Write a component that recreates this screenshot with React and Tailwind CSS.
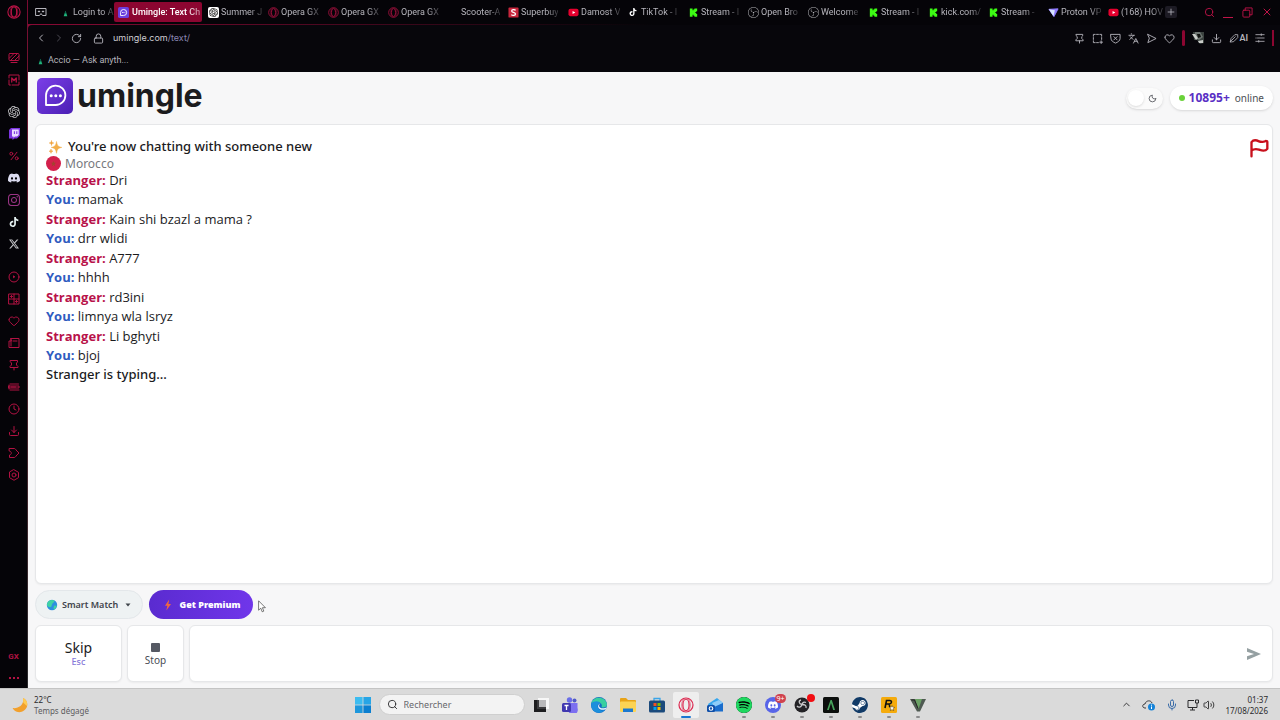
import React from "react";
import {
  SiOpenai, SiDiscord, SiInstagram, SiTiktok, SiX, SiObsstudio, SiSpotify, SiSteam,
} from "react-icons/si";
import {
  ChevronLeft, ChevronRight, RotateCw, Lock, Heart, Download, Search, X, Plus, Languages,
  Clock, ChevronUp, Mic, Volume2, Moon,
} from "lucide-react";

/* ---------- brand and emoji drawings ---------- */

const Opera = ({ className }) => (
  <svg viewBox="0 0 24 24" fill="none" stroke="currentColor" strokeWidth="1.8" className={className} aria-hidden="true">
    <circle cx="12" cy="12" r="10.5" />
    <ellipse cx="12" cy="12" rx="4.6" ry="8.6" />
    <path d="M9 3.2C4.6 6 4.6 18 9 20.8M15 3.2c4.400 2.800 4.400 14.800 0 17.600" strokeWidth="1" />
  </svg>
);

const Bubble = ({ className }) => (
  <svg viewBox="0 0 36 36" className={className} aria-hidden="true">
    <defs>
      <linearGradient id="bubbleFill" x1="0" y1="0" x2="1" y2="1">
        <stop offset="0" stopColor="#7c3fe8" />
        <stop offset="1" stopColor="#4a1fb4" />
      </linearGradient>
    </defs>
    <rect width="36" height="36" rx="5" fill="url(#bubbleFill)" />
    <path d="M9 27V17.500A9.700 9.700 0 1 1 18.700 27z" fill="none" stroke="#fff" strokeWidth="1.800" strokeLinejoin="round" />
    <circle cx="14.200" cy="17.800" r="1.500" fill="#fff" />
    <circle cx="18.800" cy="17.800" r="1.500" fill="#fff" />
    <circle cx="23.400" cy="17.800" r="1.500" fill="#fff" />
  </svg>
);

const BubbleSmall = () => (
  <svg viewBox="0 0 12 12" className="size-[11px]" aria-hidden="true">
    <rect width="12" height="12" rx="2" fill="#6a3fe0" />
    <path d="M2.800 9.300V6A3.300 3.300 0 1 1 6.100 9.300z" fill="none" stroke="#fff" />
    <path d="M4.400 6h3.500" stroke="#fff" strokeDasharray="1 .5" />
  </svg>
);

const Accio = ({ className }) => (
  <svg viewBox="0 0 12 12" className={className} aria-hidden="true">
    <path d="M6 4 8 10H4z" fill="#1fb27a" />
    <path d="M6 4 7 7H5z" fill="#0b5c4a" />
  </svg>
);

const Superbuy = ({ className }) => (
  <svg viewBox="0 0 12 12" className={className} aria-hidden="true">
    <rect x="0.500" y="0.500" width="11" height="11" rx="1" fill="#c8263c" />
    <path d="M8.300 3.600C7.500 2.500 4 2.400 4 4.300c0 1.900 4.200 1.200 4.200 3.300 0 2-3.600 1.900-4.500.700" fill="none" stroke="#fff" strokeWidth="1.400" />
  </svg>
);

const YouTube = ({ className }) => (
  <svg viewBox="0 0 12 12" className={className} aria-hidden="true">
    <rect x="0.500" y="2" width="11" height="8" rx="2" fill="#e6002e" />
    <path d="M5 4.300 8 6 5 7.700z" fill="#fff" />
  </svg>
);

const Kick = ({ className }) => (
  <svg viewBox="0 0 12 12" className={className} aria-hidden="true">
    <path d="M2 1.500h3v2h1v-1h1v-1h3v3H9v1H8v1h1v1h1v3H7v-1H6v-1H5v2H2z" fill="#3dfc14" />
  </svg>
);

const Proton = ({ className }) => (
  <svg viewBox="0 0 12 12" className={className} aria-hidden="true">
    <path d="M1 2.500 11 2 6.500 10.500z" fill="#8f7bff" stroke="#8f7bff" strokeLinejoin="round" />
    <path d="M1 2.500 7.500 3.500 6 10z" fill="#d9e6ff" />
  </svg>
);

const Twitch = ({ className }) => (
  <svg viewBox="0 0 12 12" className={className} aria-hidden="true">
    <path d="M3 0h9v7.500L9 10.500H6.500L4.500 12v-1.500H1V2z" fill="#7c35e0" />
    <path d="M4 1.500h6.700V7L9 8.500H7L5.500 9.700V8.500H4z" fill="#e9dcff" />
    <path d="M6.400 3.300v2.800M8.800 3.300v2.800" stroke="#7c35e0" strokeWidth="1.100" />
  </svg>
);

const OpenAiTile = () => (
  <span className="grid size-[11px] place-items-center rounded-xs bg-white text-black">
    <SiOpenai className="size-[9px]" />
  </span>
);

const Blank = ({ className }) => <span className={className} />;

const Bolt = ({ className }) => (
  <svg viewBox="0 0 12 12" className={className} aria-hidden="true">
    <path d="M7.200.500 3 6.800h2.400L4.300 11.500 9 5H6.400z" fill="#f0693f" />
  </svg>
);

const Sparkles = ({ className }) => (
  <svg viewBox="0 0 14 14" className={className} aria-hidden="true">
    <path d="M8.500 1.500C9.300 5.700 9.900 6.600 13.800 7.400 9.900 8.200 9.300 9.100 8.500 13.300 7.700 9.100 7.100 8.200 3.200 7.400 7.100 6.600 7.700 5.700 8.500 1.500z" fill="#f3ae49" stroke="#f3ae49" strokeWidth=".500" />
    <path d="M3.500.500C3.800 2.300 4 2.600 5.800 3 4 3.400 3.800 3.700 3.500 5.500 3.200 3.700 3 3.400 1.200 3 3 2.600 3.200 2.300 3.500.500z" fill="#f0a23c" stroke="#f0a23c" strokeWidth=".500" />
    <path d="M3 9C3.200 10.600 3.500 10.800 5 11.200 3.500 11.500 3.200 11.800 3 13.400 2.800 11.800 2.500 11.500 1 11.200 2.500 10.800 2.800 10.600 3 9z" fill="#f0a23c" stroke="#f0a23c" strokeWidth=".500" />
  </svg>
);

const Globe = ({ className }) => (
  <svg viewBox="0 0 12 12" className={className} aria-hidden="true">
    <circle cx="6" cy="6" r="5.200" fill="#2c8fe0" />
    <path d="M2 2.800C4 .400 7 .600 8.600 1.600 8.400 4 6 4 5.800 6S4.400 8.400 3 8 .700 6 .900 5.200zM8.500 6.500l2.400.300c-.400 2-1.700 3.200-3.100 3.900-.400-1.600-.200-3.200.700-4.200z" fill="#3fd3a4" />
  </svg>
);

const WeatherMoon = ({ className }) => (
  <svg viewBox="0 0 16 16" className={className} aria-hidden="true">
    <path d="M11 1C14.500 2.500 16 6 15 9.500 13.500 14.500 7 17 2.500 13.500 1.600 12.800 1 12 .600 11 6.500 12 12.500 7.500 11 1z" fill="#f2a02c" />
    <path d="M11 1c3.500 1.500 4.800 5 4 8-1.500-1-2.700-2.500-3.800-3.500z" fill="#ffcb52" />
  </svg>
);

const Line = ({ className, children, width = 2 }) => (
  <svg viewBox="0 0 24 24" fill="none" stroke="currentColor" strokeWidth={width} strokeLinejoin="round" strokeLinecap="round" className={className} aria-hidden="true">
    {children}
  </svg>
);

const Corner = (p) => <Line {...p}><rect x="2" y="3" width="20" height="14" rx="2" /><path d="M3 12 12 3M5 17 19 3M13 17l9-9M6 21h12" /></Line>;
const ModsIcon = (p) => <Line {...p}><path d="M2 8V2h20v10M22 16v6H8M2 12v10h3" /><path d="M7.500 16V8l4.500 5 4.500-5v8" strokeWidth="2.600" /></Line>;
const Deals = (p) => <Line {...p} width={2.4}><circle cx="5.500" cy="6.500" r="3.500" /><circle cx="18.500" cy="17.500" r="3.500" /><path d="M19 3 5 21" /></Line>;
const Player = (p) => <Line {...p}><circle cx="12" cy="12" r="10" /><path d="M11 10.500v3l2-1.500z" fill="currentColor" /></Line>;
const Tiles = (p) => <Line {...p}><rect x="2" y="2" width="20" height="20" /><path d="M12 2v20M2 12h20M7 5v4M5 7h4M17 15v4M15 17h4" /></Line>;
const News = (p) => <Line {...p}><path d="M6 3h16v18H2V8h4zM6 3v15M10 8h8" /></Line>;
const Pushpin = (p) => <Line {...p}><path d="M5 3h14v3l-2 2v4l3 3v2H4v-2l3-3V8L5 6zM12 17v5" /></Line>;
const Wallet = (p) => <Line {...p}><path d="M4 6h17M2 10h20v4H2zM4 18h18M6 12h9M2 8v8" /></Line>;
const Hex = (p) => <Line {...p}><path d="m12 1.500 9 5.200v10.600l-9 5.200-9-5.200V6.700z" /><circle cx="12" cy="12" r="4" /></Line>;
const Extension = (p) => <Line {...p}><path d="M3 3h9c2 0 3 1 4 3l6 6-6 6c-1 2-2 3-4 3H3v-5c5-1 5-7 0-8z" /></Line>;
const Snapshot = (p) => <Line {...p}><path d="M3 7V3h4M10 3h4M17 3h4v4M21 10v4M3 10v4M3 17v4h4M10 21h4M20 17v6M17 20h6" /></Line>;
const Shield = (p) => <Line {...p}><path d="M2 3h20v9c0 5-5 8-10 10C7 20 2 17 2 12zM8.500 8l7 7M15.500 8l-7 7" /></Line>;
const Plane = (p) => <Line {...p}><path d="m4 3 18 9-18 9 3-9z" /></Line>;
const Menu = (p) => <Line {...p}><path d="M2 4h20M6 12h16M2 20h20M2 12h1M15 2v4M9 18v4" /></Line>;
const Pen = (p) => <Line {...p}><path d="m3 21 2-8 9-9h7v7l-9 9zM8 16l7-7M3 21l5-5" /></Line>;
const Restore = (p) => <Line {...p}><rect x="2" y="7" width="15" height="15" rx="2" /><path d="M7 7V2h15v15h-5" /></Line>;
const Visor = (p) => <Line {...p}><path d="M2 5h20v14h-7l-3-4-3 4H2z" /><path d="M7 11h2M15 11h2" strokeWidth="3" /></Line>;
const Flag = (p) => <Line {...p} width={2.8}><path d="M3 22V5C6 1 10 3 12 4s7 1 8-.500c1 0 2 .500 2 1.500v8c-3 4-7 2-10 1s-6-1-9 1" /></Line>;

const TeamsIcon = () => (
  <svg viewBox="0 0 16 16" className="size-4" aria-hidden="true">
    <circle cx="7.500" cy="3" r="2.700" fill="#6a6ee8" /><circle cx="12.500" cy="3.500" r="2" fill="#5059c9" />
    <path d="M3 6h12.500v5a4.500 4.500 0 0 1-9 3.500H3z" fill="#7c6ff0" />
    <rect y="6" width="9" height="9" rx="1.500" fill="#4038b0" /><path d="M2.500 8.500h4M4.500 8.500v4.500" stroke="#fff" strokeWidth="1.300" />
  </svg>
);
const EdgeIcon = () => (
  <svg viewBox="0 0 16 16" className="size-4" aria-hidden="true">
    <circle cx="8" cy="8" r="8" fill="#1269c4" />
    <path d="M.300 6.500C2-1 14-1.500 15.900 7c.400 3-2.500 4.300-5.500 3.200C12 7 9 5 6.500 5S2 5.500.300 6.500z" fill="#38cfa0" />
    <path d="M.300 6.500C3 3.500 8 3.500 9.500 6.500 6 6 5.500 11 9 13c2 1 4 .500 5.500-.500C10 18-1 16.500.300 6.500z" fill="#1b8fdc" />
    <path d="M9.500 6.500c-2 1-2 4 1 4.700 2 .400 4 0 5-1l-.800 2c-5 2-8-1-7.500-3.500.300-1.300 1.300-2.100 2.300-2.200z" fill="#eef8ff" />
  </svg>
);
const FolderIcon = () => (
  <svg viewBox="0 0 16 16" className="size-4" aria-hidden="true">
    <path d="M0 2a1 1 0 0 1 1-1h5l2 2h7a1 1 0 0 1 1 1v10H0z" fill="#e8a317" />
    <rect y="4.500" width="16" height="10.500" rx="1" fill="#fcd354" /><path d="M3 11.500h10V15H3z" fill="#1b78cf" />
  </svg>
);
const StoreIcon = () => (
  <svg viewBox="0 0 16 16" className="size-4" aria-hidden="true">
    <path d="M5 4V1.500h6V4" fill="none" stroke="#3aa5e8" strokeWidth="1.300" />
    <rect y="3.500" width="16" height="12" rx="1.500" fill="#1b4a7c" />
    <path d="M4.500 6h3v3h-3z" fill="#f25022" /><path d="M8.500 6h3v3h-3z" fill="#7fba00" />
    <path d="M4.500 10h3v3h-3z" fill="#00a4ef" /><path d="M8.500 10h3v3h-3z" fill="#ffb900" />
  </svg>
);
const OutlookIcon = () => (
  <svg viewBox="0 0 16 16" className="size-4" aria-hidden="true">
    <path d="M1 7 10 1l6 5v8H3z" fill="#35a6ee" /><path d="M5 6 12 3l4 3-8 5z" fill="#8fcdf8" />
    <path d="m7 10 9-4v8.500H5z" fill="#1a6dcc" /><rect y="8" width="8" height="7" rx="1.500" fill="#0f4fa8" />
    <circle cx="4" cy="11.500" r="1.800" fill="none" stroke="#fff" strokeWidth="1.100" />
  </svg>
);
const WindowsIcon = () => (
  <svg viewBox="0 0 16 16" className="size-4" aria-hidden="true">
    <path d="M0 0h7.600v7.600H0z" fill="#3cbcf0" /><path d="M8.400 0H16v7.600H8.400z" fill="#27a5e6" />
    <path d="M0 8.400h7.600V16H0z" fill="#1d97dc" /><path d="M8.400 8.400H16V16H8.400z" fill="#0b7fd0" />
  </svg>
);
const TaskViewIcon = () => (
  <svg viewBox="0 0 16 16" className="size-4" aria-hidden="true">
    <path d="M5 1h11v11H5z" fill="#f7f7f7" /><path d="M1 3h3v9h9v3H1z" fill="#1d1d1f" /><path d="M4 3h9v9H4z" fill="#3a3a3d" /><path d="M6 3h7v7H6z" fill="#b9b9bb" />
  </svg>
);
const ChevronApp = () => (
  <svg viewBox="0 0 16 16" className="size-4" aria-hidden="true">
    <rect width="16" height="16" rx="1.500" fill="#0c0f0d" />
    <path d="M4 13 7.500 3h1.300L12 13h-1.800L8 6 5.800 13z" fill="#47a35b" />
  </svg>
);
const ObsIcon = () => (
  <svg viewBox="0 0 16 16" className="size-4" aria-hidden="true">
    <circle cx="8" cy="8" r="7.500" fill="#232226" />
    <path d="M7 3C4.500 3.500 4.500 7 8 7.500c3 0 4.500 1 4 3.500M8 7.500C7 10.500 4.500 11 3 9M8 7.500c.500-2 2-3 4-2" fill="none" stroke="#c9c9cb" strokeWidth="1.300" />
  </svg>
);
const RockstarIcon = () => (
  <svg viewBox="0 0 16 16" className="size-4" aria-hidden="true">
    <rect width="16" height="16" rx="1.500" fill="#f5ab0c" />
    <path d="M4 11 5.500 3.500h3.200c2.600 0 2.200 3.500-.500 3.500H5M7.500 7c1.500.300.800 2 1.200 3" fill="none" stroke="#111" strokeWidth="1.600" />
    <path d="m11 8.500.800 1.700 1.900.200-1.400 1.300.400 1.900-1.700-1-1.700 1 .400-1.900-1.400-1.300 1.900-.200z" fill="#fff" stroke="#111" strokeWidth=".400" />
  </svg>
);
const FiveIcon = () => (
  <svg viewBox="0 0 16 16" className="size-4" aria-hidden="true">
    <path d="M0 2h5.500l2.800 7L11 2h5l-6 12.500H7z" fill="#4f5a52" /><path d="M5 2h7L8.500 12z" fill="#6aa164" />
    <path d="M1.500 3h3L8 11.500" fill="none" stroke="#222" />
  </svg>
);

/* ---------- browser chrome ---------- */

const tabs = [
  { title: "Login to A", icon: Accio },
  { title: "Umingle: Text Ch", icon: BubbleSmall, active: true },
  { title: "Summer J", icon: OpenAiTile },
  { title: "Opera GX", icon: Opera, tint: "text-[#b01243]" },
  { title: "Opera GX", icon: Opera, tint: "text-[#b01243]" },
  { title: "Opera GX", icon: Opera, tint: "text-[#b01243]" },
  { title: "Scooter-A", icon: Blank },
  { title: "Superbuy", icon: Superbuy },
  { title: "Damost V", icon: YouTube },
  { title: "TikTok - I", icon: SiTiktok, tint: "text-white" },
  { title: "Stream - I", icon: Kick },
  { title: "Open Bro", icon: SiObsstudio, tint: "text-[#b9b9bd]" },
  { title: "Welcome", icon: SiObsstudio, tint: "text-[#b9b9bd]" },
  { title: "Stream - I", icon: Kick },
  { title: "kick.com/", icon: Kick },
  { title: "Stream -", icon: Kick },
  { title: "Proton VP", icon: Proton },
  { title: "(168) HOV", icon: YouTube },
];

function Tab({ title, icon: Icon, active, tint = "" }) {
  return (
    <button
      type="button"
      className={
        active
          ? "flex h-5 w-[88px] shrink-0 items-center gap-[3px] rounded-xs bg-[#8c0631] px-[3px] text-white"
          : "flex h-5 w-15 shrink-0 items-center gap-0.5 pl-[5px] text-[#b6b5bc]"
      }
    >
      <span className={"grid size-3 shrink-0 place-items-center " + tint}>
        <Icon className={Icon === SiTiktok ? "size-2" : "size-[11px]"} />
      </span>
      <span
        className={
          active
            ? "text-left text-[9px] leading-3 font-medium whitespace-nowrap [mask-image:linear-gradient(to_right,#000_80%,#0006)]"
            : "text-left text-[9px] leading-3 whitespace-nowrap [mask-image:linear-gradient(to_right,#000_70%,#0004)]"
        }
      >
        {title}
      </span>
    </button>
  );
}

const railTop = [
  { name: "GX Corner", icon: Corner },
  { name: "Mods", icon: ModsIcon },
];
const railApps = [
  { name: "ChatGPT", icon: SiOpenai, tint: "text-[#c9c9cc]" },
  { name: "Twitch", icon: Twitch },
  { name: "Deals", icon: Deals, small: true },
  { name: "Discord", icon: SiDiscord, tint: "text-[#dcdcf0]" },
  { name: "Instagram", icon: SiInstagram, tint: "text-[#9a3585]" },
  { name: "TikTok", icon: SiTiktok, tint: "text-[#e8f4f4]", small: true },
  { name: "X", icon: SiX, tint: "text-[#c4c4c8]", small: true },
];
const railTools = [
  { name: "Player", icon: Player },
  { name: "Speed dial", icon: Tiles },
  { name: "Favourites", icon: Heart },
  { name: "News", icon: News },
  { name: "Pinboards", icon: Pushpin },
  { name: "Wallet", icon: Wallet },
  { name: "History", icon: Clock },
  { name: "Downloads", icon: Download },
  { name: "Extensions", icon: Extension },
  { name: "Settings", icon: Hex },
];

function RailItem({ name, icon: Icon, small, tint = "text-[#b31243]" }) {
  return (
    <button type="button" aria-label={name} className={"grid h-[22px] w-full place-items-center " + tint}>
      <Icon className={small ? "size-2.5" : "size-3"} />
    </button>
  );
}

function SideRail() {
  return (
    <nav aria-label="Sidebar" className="flex w-[27px] shrink-0 flex-col bg-[#050408]">
      <button type="button" aria-label="Opera menu" className="grid h-6 place-items-center text-[#c01448]">
        <Opera className="size-3.5" />
      </button>
      <div className="mt-[23px]">{railTop.map((i) => <RailItem key={i.name} {...i} />)}</div>
      <div className="mt-2.5">{railApps.map((i) => <RailItem key={i.name} {...i} />)}</div>
      <div className="mt-[11px]">{railTools.map((i) => <RailItem key={i.name} {...i} />)}</div>
      <div className="mt-auto text-[#b31243]">
        <button type="button" className="grid h-[22px] w-full place-items-center text-[8px] font-bold">GX</button>
        <button type="button" aria-label="More" className="flex h-5 w-full items-center justify-center gap-0.5">
          <span className="size-0.5 bg-current" /><span className="size-0.5 bg-current" /><span className="size-0.5 bg-current" />
        </button>
      </div>
    </nav>
  );
}

const addressActions = [
  { name: "Pin", icon: Pushpin },
  { name: "Snapshot", icon: Snapshot },
  { name: "Shield", icon: Shield },
  { name: "Translate", icon: Languages },
  { name: "Send to flow", icon: Plane },
  { name: "Favourite", icon: Heart },
];

function BrowserHeader() {
  return (
    <header className="bg-[#050408] text-[#b6b5bc]">
      <div className="flex h-6 items-center overflow-hidden">
        <button type="button" aria-label="Workspace" className="grid w-[26px] shrink-0 place-items-center">
          <Visor className="size-3" />
        </button>
        {tabs.map((t, i) => <Tab key={i} {...t} />)}
        <button type="button" aria-label="New tab" className="ml-[3px] grid size-3 shrink-0 place-items-center rounded-xs bg-[#1d1b24]">
          <Plus className="size-2.5" />
        </button>
        <div className="ml-auto flex shrink-0 items-center gap-2 pr-[7px] text-[#c01448]">
          <button type="button" aria-label="Search tabs"><Search className="size-[11px]" /></button>
          <button type="button" aria-label="Minimise" className="flex h-[11px] w-[11px] items-end"><span className="h-px w-2.5 bg-current" /></button>
          <button type="button" aria-label="Restore"><Restore className="size-[11px]" /></button>
          <button type="button" aria-label="Close"><X className="size-3" /></button>
        </div>
      </div>
      <div className="bg-linear-to-r from-[#8a0a35] to-transparent to-50% pt-px">
        <div className="rounded-tl-sm bg-[#07060b]">
          <div className="flex h-[26px] items-center pr-1.5 pl-[7px]">
            <div className="flex items-center gap-1.5">
              <button type="button" aria-label="Back"><ChevronLeft className="size-3" /></button>
              <button type="button" aria-label="Forward" className="text-[#4c4a53]"><ChevronRight className="size-3" /></button>
              <button type="button" aria-label="Reload"><RotateCw className="size-[11px]" /></button>
            </div>
            <Lock className="ml-[11px] size-[11px]" />
            <p className="ml-[9px] text-[9px] leading-3 text-[#cfced4] font-[Inter,sans-serif]">umingle.com<span className="text-[#8b86b5]">/text/</span></p>
            <div className="ml-auto flex items-center gap-[7px]">
              {addressActions.map(({ name, icon: Icon }) => (
                <button key={name} type="button" aria-label={name}><Icon className="size-[11px]" /></button>
              ))}
              <span className="h-4 w-[3px] rounded-full bg-[#8c0631]" />
              <button type="button" aria-label="Profile">
                <svg viewBox="0 0 12 12" className="size-3" aria-hidden="true">
                  <path d="M1 0h11v11l-4 1-3-4H2z" fill="#3b423f" /><path d="M3 0h5l3 5-4 3-4-2z" fill="#6e7672" />
                  <path d="M0 2h3l3 4-2 2zM6 9l5-1v3H7z" fill="#c9ccc9" /><path d="M5 2h3l1 3-3 1z" fill="#101311" />
                </svg>
              </button>
              <button type="button" aria-label="Downloads"><Download className="size-[11px]" /></button>
              <button type="button" className="flex items-center text-[9px] leading-3 font-semibold"><Pen className="size-2.5" />AI</button>
              <button type="button" aria-label="Menu"><Menu className="size-2.5" /></button>
              <span className="h-4 w-0.5 bg-[#8c0631]" />
            </div>
          </div>
          <div className="flex h-[21px] items-start pt-[3px] pl-[7px]">
            <a href="#accio" className="flex items-center gap-0.5 text-[9px] leading-3"><Accio className="size-[11px]" />Accio — Ask anyth...</a>
          </div>
        </div>
      </div>
    </header>
  );
}

/* ---------- chat page ---------- */

const exchanges = [
  ["Dri", "mamak"],
  ["Kain shi bzazl a mama ?", "drr wlidi"],
  ["A777", "hhhh"],
  ["rd3ini", "limnya wla lsryz"],
  ["Li bghyti", "bjoj"],
];

const card = "rounded-md border border-[#e6e7e9] bg-white shadow-xs";

function ChatPage() {
  return (
    <main className="flex min-h-0 flex-1 flex-col bg-[#f7f7f8] px-[7px] pb-1.5 font-['Noto_Sans','Open_Sans',sans-serif] text-[#1b1b1d]">
      <div className="flex h-13 shrink-0 items-center justify-between">
        <a href="#home" className="flex items-center gap-1 pb-1 pl-0.5">
          <Bubble className="size-9" />
          <span className="font-[Inter,sans-serif] text-[32px] leading-9 font-bold text-[#1b1b1d]">umingle</span>
        </a>
        <div className="flex items-center gap-[7px]">
          <button type="button" role="switch" aria-checked="false" aria-label="Dark mode" className="flex h-[21px] items-center gap-1 rounded-full bg-[#fbfbfb] pr-1.5 pl-0.5 shadow-sm">
            <span className="size-4 rounded-full bg-white shadow-sm" />
            <Moon className="size-[9px] text-[#3f4248]" />
          </button>
          <p className="flex h-6 items-center rounded-full bg-white px-[9px] text-[10px] leading-4 text-[#4c4f55] shadow-sm">
            <span className="size-1.5 rounded-full bg-[#6ad23a]" />
            <strong className="mr-[5px] ml-1 text-[12px] font-bold text-[#5a2fc4]">10895+</strong>online
          </p>
        </div>
      </div>

      <section aria-label="Conversation" className={card + " flex min-h-0 flex-1 items-start justify-between overflow-hidden pt-3 pr-[3px] pl-2.5"}>
        <div className="text-[13px] leading-[19px]">
          <p className="flex items-center gap-1.5 font-medium"><Sparkles className="ml-0.5 size-3.5" />You're now chatting with someone new</p>
          <p className="flex items-center gap-1 text-[12px] leading-[15px] text-[#77797e]">
            <svg viewBox="0 0 16 16" className="size-[15px]" aria-hidden="true">
              <circle cx="8" cy="8" r="8" fill="#d3204b" />
              <path d="m8 5 .800 2.200H11L9.200 8.600 9.900 11 8 9.600 6.100 11l.700-2.400L5 7.200h2.200z" fill="#a0442f" />
            </svg>
            Morocco
          </p>
          <div className="flex flex-col gap-px font-['Open_Sans',sans-serif]">
            {exchanges.map(([them, me]) => (
              <div key={them}>
                <p><b className="text-[#b8124a]">Stranger:</b> {them}</p>
                <p><b className="text-[#2f5bc0]">You:</b> {me}</p>
              </div>
            ))}
          </div>
          <p className="font-medium">Stranger is typing...</p>
        </div>
        <button type="button" aria-label="Report" className="pt-px text-[#c8101c]"><Flag className="size-5" /></button>
      </section>

      <div className="mt-1.5 flex h-[29px] shrink-0 items-stretch">
        <label className="flex w-[108px] items-center rounded-full border border-[#e3e7ea] bg-[#eef2f3] pl-2.5 text-[#3f444b]">
          <Globe className="size-3 shrink-0" />
          <select aria-label="Match mode" className="ml-1 w-[61px] appearance-none bg-transparent text-[9px] font-semibold">
            <option>Smart Match</option>
          </select>
          <svg viewBox="0 0 6 4" className="ml-0.5 h-1 w-1.5" aria-hidden="true"><path d="M.500.500h5L3 3.500z" fill="#3f444b" /></svg>
        </label>
        <button type="button" className="ml-1.5 flex w-[104px] items-center justify-center gap-1.5 rounded-full bg-linear-to-r from-[#5a2bd0] to-[#7036ea] text-[9px] font-black text-white">
          <Bolt className="size-3" />Get Premium
        </button>
        <svg viewBox="0 0 8 13" className="mt-2.5 ml-[5px] h-[13px] w-2" aria-hidden="true">
          <path d="M.600.800v9.400l2.200-2 1.400 3.600 1.600-.700-1.400-3.400h3z" fill="#fff" stroke="#444" strokeWidth=".700" />
        </svg>
      </div>

      <form className="mt-1.5 flex h-[57px] shrink-0 gap-[5px]" onSubmit={(e) => e.preventDefault()}>
        <button type="button" className={card + " flex w-[87px] flex-col items-center justify-center"}>
          <span className="text-[14px] leading-4">Skip</span>
          <span className="text-[9px] leading-[11px] font-medium text-[#8679d8]">Esc</span>
        </button>
        <button type="button" className={card + " flex w-[57px] flex-col items-center justify-center gap-0.5 pt-0.5 text-[10px] leading-3 text-[#4a4d54]"}>
          <span className="size-[9px] rounded-[1px] bg-[#555963]" />
          Stop
        </button>
        <div className={card + " flex flex-1 items-stretch"}>
          <textarea aria-label="Message" className="min-w-0 flex-1 resize-none bg-transparent p-2 text-[13px] outline-none" />
          <button type="submit" aria-label="Send" className="grid w-9 place-items-center text-[#95a0a2]">
            <svg viewBox="0 0 14 12" className="h-3 w-3.5" aria-hidden="true"><path d="M0 0 14 6 0 12V8.200L7 6 0 3.800z" fill="currentColor" /></svg>
          </button>
        </div>
      </form>
    </main>
  );
}

/* ---------- desktop taskbar ---------- */

const Mark = () => <span className="absolute bottom-0 h-0.5 w-1 rounded-full bg-[#8b8b8d]" />;

const apps = [
  { name: "Task view", art: <TaskViewIcon /> },
  { name: "Teams", art: <TeamsIcon /> },
  { name: "Edge", art: <EdgeIcon /> },
  { name: "Explorer", art: <FolderIcon /> },
  { name: "Store", art: <StoreIcon /> },
  { name: "Opera GX", art: <Opera className="size-4 text-[#dc2950]" />, current: true },
  { name: "Outlook", art: <OutlookIcon /> },
  { name: "Spotify", art: <span className="rounded-full bg-black"><SiSpotify className="size-4 text-[#1fd760]" /></span>, open: true },
  { name: "Discord", art: <span className="grid size-4 place-items-center rounded-full bg-[#5865e8]"><SiDiscord className="size-2.5 text-white" /></span>, open: true, badge: "9+" },
  { name: "OBS Studio", art: <ObsIcon />, open: true, dot: true },
  { name: "Launcher", art: <ChevronApp />, open: true },
  { name: "Steam", art: <span className="rounded-full bg-white"><SiSteam className="size-4 text-[#113a66]" /></span>, open: true },
  { name: "Rockstar", art: <RockstarIcon />, open: true },
  { name: "GTA V", art: <FiveIcon />, open: true },
];

function Taskbar() {
  return (
    <footer className="grid h-8 shrink-0 grid-cols-[1fr_auto_1fr] items-center border-t border-[#c4c4c4] bg-[#dadada] font-['Noto_Sans','Open_Sans',sans-serif] text-[#2b2b2d]">
      <div className="flex items-center gap-1.5 pl-3">
        <WeatherMoon className="size-4" />
        <p className="text-[8px] leading-[11px]">22°C<br /><span className="text-[#5c5c60]">Temps dégagé</span></p>
      </div>
      <div className="flex items-center gap-[3px]">
        <button type="button" aria-label="Start" className="grid w-6.5 place-items-center"><WindowsIcon /></button>
        <label className="flex h-[21px] w-[146px] items-center gap-1.5 rounded-full border border-[#cfcfcf] bg-[#f3f3f3] pl-[7px]">
          <Search className="size-[11px] shrink-0" />
          <input type="search" aria-label="Search" placeholder="Rechercher" className="min-w-0 flex-1 bg-transparent text-[9px] outline-none placeholder:text-[#68686c]" />
        </label>
        <div className="flex gap-[3px]">
          {apps.map((a) => (
            <button
              key={a.name}
              type="button"
              aria-label={a.name}
              className={a.current ? "relative grid h-6.5 w-6.5 place-items-center rounded-xs bg-[#eeeeee]" : "relative grid h-6.5 w-6.5 place-items-center"}
            >
              {a.art}
              {a.open && <Mark />}
              {a.current && <span className="absolute bottom-0 h-0.5 w-2.5 rounded-full bg-[#1976d2]" />}
              {a.badge && <span className="absolute top-0.5 right-0 rounded-full bg-[#d0424e] px-px text-[7px] leading-[9px] text-white">{a.badge}</span>}
              {a.dot && <span className="absolute top-0.5 right-0 size-2 rounded-full bg-[#f20d12]" />}
            </button>
          ))}
        </div>
      </div>
      <div className="flex items-center justify-end pr-3">
        <ChevronUp className="size-[11px]" />
        <svg viewBox="0 0 14 12" className="ml-2.5 h-3 w-3.5" aria-hidden="true">
          <path d="M4 9H3C0 9 0 5 3 5 4 1 9 1 10 4" fill="none" stroke="#3a3a3c" />
          <circle cx="9.500" cy="8" r="3.500" fill="#1583d8" /><path d="M9.500 7.500v2.500M9.500 5.700v1" stroke="#fff" />
        </svg>
        <Mic className="ml-2.5 size-3 text-[#3a6ca8]" />
        <svg viewBox="0 0 12 12" fill="none" stroke="currentColor" className="ml-[9px] size-3" aria-hidden="true">
          <path d="M7 1.500H1v7h9V6M3 11h5M5.500 8.500V11M8.500 1h3v3h-3zM10 4v2" />
        </svg>
        <Volume2 className="ml-1 size-3" strokeWidth={1.8} />
        <p className="ml-2.5 text-right text-[8px] leading-[11px]">01:37<br />17/08/2026</p>
      </div>
    </footer>
  );
}

export default function App() {
  return (
    <div className="flex h-screen flex-col overflow-hidden font-[Roboto,Inter,sans-serif]">
      <div className="flex min-h-0 flex-1">
        <SideRail />
        <div className="flex min-w-0 flex-1 flex-col bg-linear-to-b from-[#7a0a31] to-[#2a2a2c] pl-px">
          <BrowserHeader />
          <ChatPage />
        </div>
      </div>
      <Taskbar />
    </div>
  );
}
